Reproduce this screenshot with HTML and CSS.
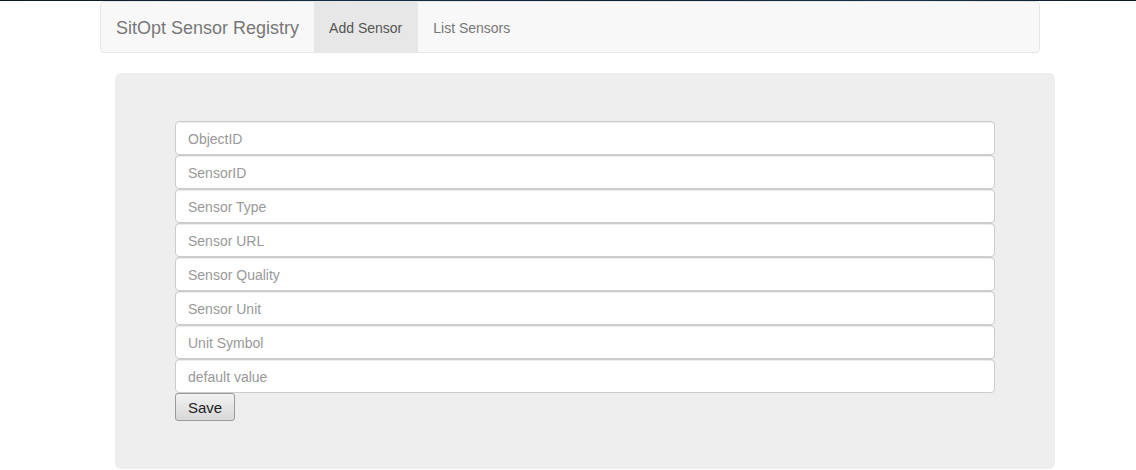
FILE: index.html
```html
<!DOCTYPE html>
<html>
<head>
<meta charset="utf-8">
<title>SitOpt Sensor Registry</title>
<link rel="stylesheet" href="styles.css">
</head>
<body>
<div class="topstrip"></div>
<nav class="navbar">
  <a class="brand" href="#">SitOpt Sensor Registry</a>
  <ul class="nav">
    <li class="active"><a href="#">Add Sensor</a></li>
    <li><a href="#">List Sensors</a></li>
  </ul>
</nav>
<div class="jumbotron">
  <form class="sensor-form">
    <input class="form-control" type="text" placeholder="ObjectID">
    <input class="form-control" type="text" placeholder="SensorID">
    <input class="form-control" type="text" placeholder="Sensor Type">
    <input class="form-control" type="text" placeholder="Sensor URL">
    <input class="form-control" type="text" placeholder="Sensor Quality">
    <input class="form-control" type="text" placeholder="Sensor Unit">
    <input class="form-control" type="text" placeholder="Unit Symbol">
    <input class="form-control" type="text" placeholder="default value">
    <button class="save-btn" type="button">Save</button>
  </form>
</div>
</body>
</html>
```

FILE: styles.css
```css
* { box-sizing: border-box; }
html, body {
  margin: 0;
  padding: 0;
  background: #fff;
  font-family: "Liberation Sans", Arial, sans-serif;
  font-size: 14px;
  color: #333;
}
.topstrip {
  height: 1px;
  background: linear-gradient(90deg, #0b1622 0%, #123048 30%, #0d2236 55%, #15344c 80%, #0b1622 100%);
}
.navbar {
  display: flex;
  align-items: stretch;
  width: 940px;
  height: 52px;
  margin: 0 0 20px 100px;
  background: #f8f8f8;
  border: 1px solid #e7e7e7;
  border-radius: 4px;
}
.brand {
  display: block;
  padding: 16px 15px 14px;
  height: 50px;
  font-size: 18px;
  line-height: 20px;
  color: #777;
  text-decoration: none;
}
.nav {
  display: flex;
  list-style: none;
  margin: 0;
  padding: 0;
}
.nav li a {
  display: block;
  padding: 16px 15px 14px;
  height: 50px;
  line-height: 20px;
  color: #777;
  text-decoration: none;
}
.nav li.active a {
  background: #e7e7e7;
  color: #555;
  padding-right: 16px;
}
.jumbotron {
  width: 940px;
  margin-left: 115px;
  padding: 48px 60px;
  background: #eee;
  border-radius: 6px;
}
.sensor-form {
  display: flex;
  flex-direction: column;
  align-items: flex-start;
}
.form-control {
  display: block;
  width: 820px;
  height: 34px;
  margin: 0;
  padding: 7px 12px 5px;
  font-family: "Liberation Sans", Arial, sans-serif;
  font-size: 14px;
  line-height: 20px;
  color: #555;
  background: #fff;
  border: 1px solid #ccc;
  border-radius: 4px;
  box-shadow: inset 0 1px 1px rgba(0,0,0,.075);
}
.form-control::placeholder { color: #999; }
.save-btn {
  width: 60px;
  height: 28px;
  padding: 0;
  font-family: "Liberation Sans", Arial, sans-serif;
  font-size: 15px;
  color: #222;
  background: linear-gradient(#f2f2f2, #d8d8d8);
  border: 1px solid #9a9a9a;
  border-radius: 3px;
}
```
